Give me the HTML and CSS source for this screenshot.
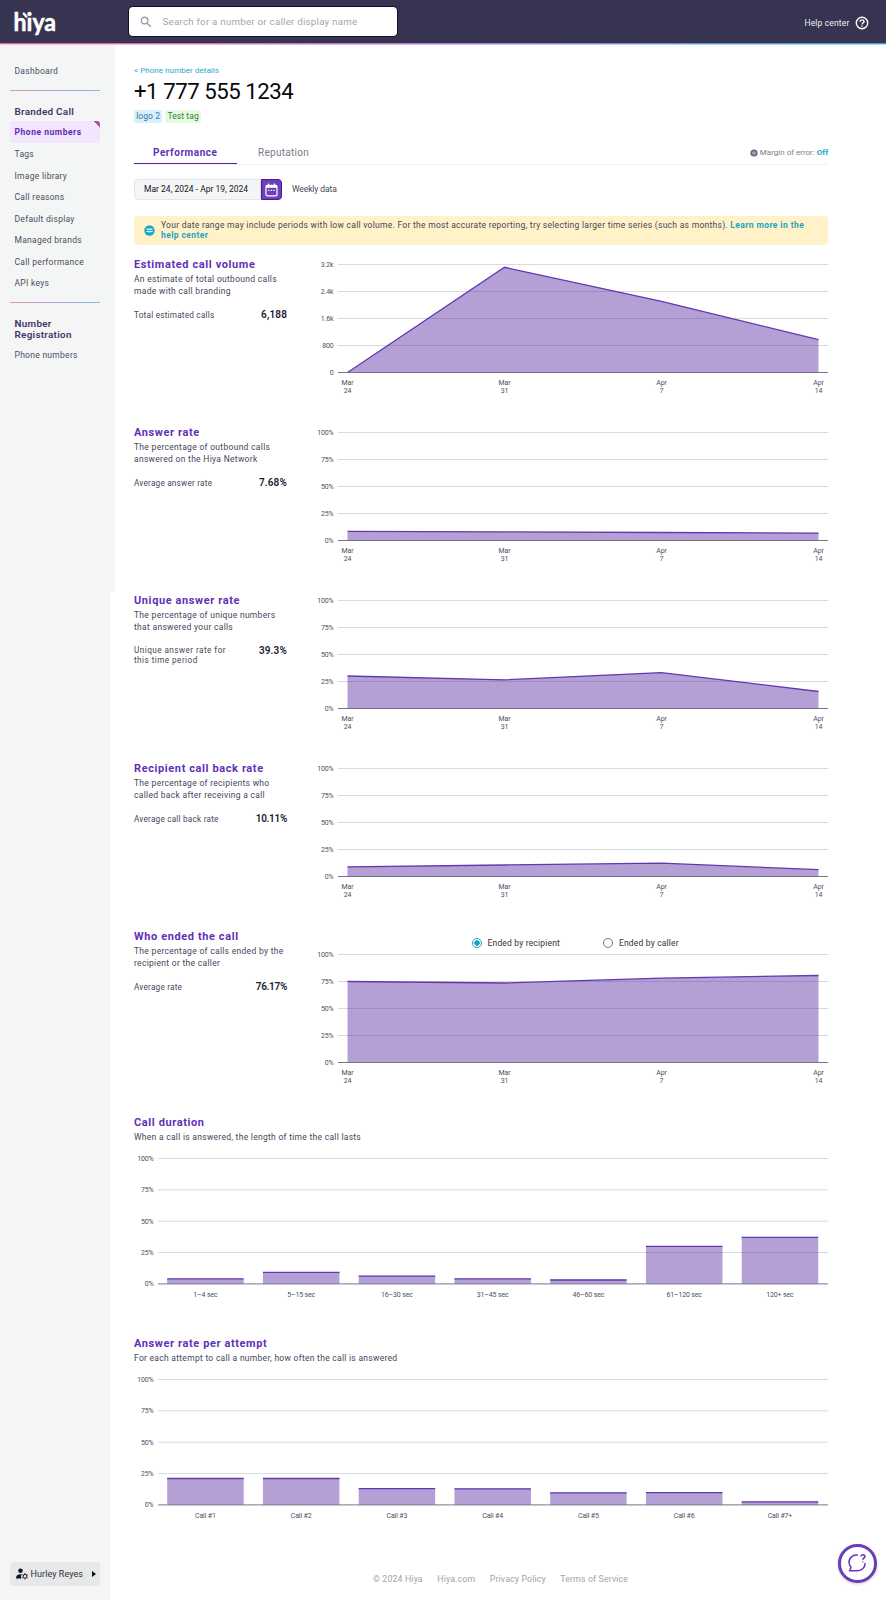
FILE: index.html
```html
<!DOCTYPE html>
<html lang="en">
<head>
<meta charset="utf-8">
<title>Phone number performance</title>
<link rel="stylesheet" href="styles.css">
</head>
<body>
<header class="topbar">
  <svg class="logo" width="44" height="30" viewBox="0 0 44 30" role="img" aria-label="hiya">
    <text x="-.5" y="22.800" textLength="42.500" lengthAdjust="spacingAndGlyphs">hiya</text>
    <path d="M9.800 5.600l2.600 3M15.600 5.800h.1"/>
  </svg>
  <div class="search">
    <svg width="12" height="12" viewBox="0 0 12 12"><circle cx="4.6" cy="4.6" r="3.3"/><path d="M7.2 7.2l3.6 3.6"/></svg>
    <span>Search for a number or caller display name</span>
  </div>
  <div class="help">
    <span>Help center</span>
    <svg width="14" height="14" viewBox="0 0 14 14"><circle cx="7" cy="7" r="5.7"/><path d="M5.1 5.7c0-2.5 3.9-2.4 3.9 0 0 1.3-2 1.4-2 2.7M7 9.6v1.2"/></svg>
  </div>
</header>
<div class="layout">
  <aside class="sidebar">
    <nav>
      <a class="item first">Dashboard</a>
      <hr>
      <h3>Branded Call</h3>
      <a class="item active">Phone numbers</a>
      <a class="item">Tags</a>
      <a class="item">Image library</a>
      <a class="item">Call reasons</a>
      <a class="item">Default display</a>
      <a class="item">Managed brands</a>
      <a class="item">Call performance</a>
      <a class="item">API keys</a>
      <hr class="second">
      <h3 class="two">Number Registration</h3>
      <a class="item">Phone numbers</a>
    </nav>
    <button class="user">
      <svg width="12" height="12" viewBox="0 0 12 12"><circle cx="4.5" cy="2.8" r="2.3"/><path d="M0 10.5c0-3 1.6-4.2 4.4-4.2.9 0 1.300.1 1.500.3-1 1-1.100 2.700-.3 3.900z"/><circle class="gear" cx="9" cy="8.300" r="1.900"/><path class="teeth" d="M9 5.200v1M9 10.400v1M6.300 6.700l.9.500M10.800 9.400l.9.500M6.300 9.900l.9-.5M10.800 7.200l.9-.5"/></svg>
      <span>Hurley Reyes</span>
      <i class="caret"></i>
    </button>
  </aside>
  <main>
    <a class="back">&lt; Phone number details</a>
    <h1>+1 777 555 1234</h1>
    <div class="tags"><span class="tag blue">logo 2</span><span class="tag green">Test tag</span></div>
    <div class="tabs">
      <span class="tab on">Performance</span><span class="tab">Reputation</span>
      <div class="margin-error">
        <svg width="8" height="8" viewBox="0 0 8 8"><circle cx="4" cy="4" r="3.600"/><path d="M2.200 3.200h3.600M2.200 4.900h3.600"/></svg>
        <span>Margin of error: <b>Off</b></span>
      </div>
    </div>
    <div class="range">
      <div class="dates">Mar 24, 2024 - Apr 19, 2024</div>
      <div class="cal"><svg width="13" height="14" viewBox="0 0 13 14"><rect x="1" y="2.300" width="11" height="10.500" rx="1.300"/><path class="top" d="M1 2.500h11v2.300H1z"/><path d="M3.500.6v2.500M9.500.6v2.500"/><path class="dots" d="M3.300 7.300h1.300M5.900 7.300h1.300M8.500 7.300h1.300"/></svg></div>
      <span class="weekly">Weekly data</span>
    </div>
    <div class="notice">
      <svg width="11" height="11" viewBox="0 0 11 11"><circle cx="5.500" cy="5.500" r="5.200"/><path d="M2.500 4.300c1-.5 2 .1 3 .1s2-.6 3-.1M2.500 6.700c1-.5 2 .1 3 .1s2-.6 3-.1"/></svg>
      <p>Your date range may include periods with low call volume. For the most accurate reporting, try selecting larger time series (such as months). <b>Learn more in the<br>help center</b></p>
    </div>

    <section class="metric">
      <div class="info"><h2>Estimated call volume</h2><p class="desc">An estimate of total outbound calls<br>made with call branding</p>
      <div class="stat"><span>Total estimated calls</span><strong>6,188</strong></div></div>
      <svg class="chart" data-kind="area" data-labels="3.2k,2.4k,1.6k,800,0" data-points="108,2.800,36.800,75.200"></svg>
    </section>
    <section class="metric">
      <div class="info"><h2>Answer rate</h2><p class="desc">The percentage of outbound calls<br>answered on the Hiya Network</p>
      <div class="stat"><span>Average answer rate</span><strong>7.68%</strong></div></div>
      <svg class="chart" data-kind="area" data-points="98.800,99.400,100,100.600"></svg>
    </section>
    <section class="metric">
      <div class="info"><h2>Unique answer rate</h2><p class="desc">The percentage of unique numbers<br>that answered your calls</p>
      <div class="stat wide"><span>Unique answer rate for<br>this time period</span><strong>39.3%</strong></div></div>
      <svg class="chart" data-kind="area" data-points="75.500,79.300,72.100,91"></svg>
    </section>
    <section class="metric">
      <div class="info"><h2>Recipient call back rate</h2><p class="desc">The percentage of recipients who<br>called back after receiving a call</p>
      <div class="stat"><span>Average call back rate</span><strong class="tight">10.11%</strong></div></div>
      <svg class="chart" data-kind="area" data-points="98.300,96.500,94.700,101.200"></svg>
    </section>
    <section class="metric ended">
      <div class="info"><h2>Who ended the call</h2><p class="desc">The percentage of calls ended by the<br>recipient or the caller</p>
      <div class="stat"><span>Average rate</span><strong class="tight">76.17%</strong></div></div>
      <div class="plot">
        <div class="radios"><label><i class="radio on"></i>Ended by recipient</label><label><i class="radio"></i>Ended by caller</label></div>
        <svg class="chart" data-kind="area" data-points="27,28.500,23.700,21"></svg>
      </div>
    </section>
    <section class="bars">
      <h2>Call duration</h2><p class="desc">When a call is answered, the length of time the call lasts</p>
      <svg class="chart" data-kind="bar" data-points="120,113.600,117.400,120,121.200,87.500,78.500" data-x="1–4 sec,5–15 sec,16–30 sec,31–45 sec,46–60 sec,61–120 sec,120+ sec"></svg>
    </section>
    <section class="bars">
      <h2>Answer rate per attempt</h2><p class="desc">For each attempt to call a number, how often the call is answered</p>
      <svg class="chart" data-kind="bar" data-points="98.700,98.700,108.800,109,113,112.800,122" data-x="Call #1,Call #2,Call #3,Call #4,Call #5,Call #6,Call #7+"></svg>
    </section>
    <footer><span>© 2024 Hiya</span><a>Hiya.com</a><a>Privacy Policy</a><a>Terms of Service</a></footer>
  </main>
</div>
<button class="fab" aria-label="Chat help">
  <svg width="20" height="20" viewBox="0 0 20 20"><path d="M10.800 2.200C5.500 1.300 1.500 5.500 2.100 10.200c.3 1.900.9 2.900 2 4.200L2.500 17.800h6.700c5.400.2 9-3 8.900-7.800"/><path class="q" d="M14 3.400c.2-2.400 4.300-2 3.900.3-.2 1.300-2.100 1.500-2.100 3M15.800 8.500v.8"/></svg>
</button>
<script src="charts.js"></script>
</body>
</html>
```
FILE: charts.js
```javascript
const PERCENT = '100%,75%,50%,25%,0%';
const DATES = [['Mar', '24'], ['Mar', '31'], ['Apr', '7'], ['Apr', '14']];

function text(cls, x, y, value) {
  return `<text class="${cls}" x="${x}" y="${y}">${value}</text>`;
}

document.querySelectorAll('.chart').forEach((svg) => {
  const area = svg.dataset.kind === 'area';
  const width = area ? 514 : 694;
  const height = area ? 140 : 150;
  const plot = area ? 108 : 125.4;
  const left = 24;
  const top = 6.5;
  const points = svg.dataset.points.split(',').map(Number);
  let out = '';

  (svg.dataset.labels || PERCENT).split(',').forEach((label, i) => {
    const y = top + (plot * i) / 4;
    out += text('y-label', left - 4.5, y + 2.5, label);
    if (i < 4) out += `<path class="grid" d="M${left} ${y}H${width}"/>`;
  });

  if (area) {
    const pts = points.map((p, i) => `${33.5 + 157 * i},${top + p}`);
    out += `<polygon class="fill" points="33.5,${top + plot} ${pts.join(' ')} 504.5,${top + plot}"/>`;
    out += `<polyline class="line" points="${pts.join(' ')}"/>`;
    DATES.forEach(([month, day], i) => {
      out += text('x-label', 33.5 + 157 * i, top + 120.6, month);
      out += text('x-label', 33.5 + 157 * i, top + 128.6, day);
    });
  } else {
    const names = svg.dataset.x.split(',');
    points.forEach((p, i) => {
      const x = 33.2 + 95.75 * i;
      out += `<rect class="fill" x="${x}" y="${top + p}" width="76.5" height="${plot - p}"/>`;
      out += `<path class="line" d="M${x} ${top + p + 0.3}h76.5"/>`;
      out += text('x-label', x + 38.2, top + plot + 12.6, names[i]);
    });
  }
  out += `<path class="axis" d="M${left} ${top + plot}H${width}"/>`;

  svg.setAttribute('width', width);
  svg.setAttribute('height', height);
  svg.setAttribute('viewBox', `0 0 ${width} ${height}`);
  svg.innerHTML = out;
});
```
FILE: styles.css
```css
* { box-sizing: border-box; }
body { margin: 0; background: #fff; color: #47455a; font: 8.5px/12px Roboto, "Liberation Sans", sans-serif; letter-spacing: .28px; }
h1, h2, h3, p { margin: 0; }
svg { display: block; flex: none; }
svg path { fill: none; }
button { border: 0; padding: 0; font: inherit; letter-spacing: inherit; color: inherit; }

.topbar { display: flex; align-items: flex-start; height: 45px; background: linear-gradient(90deg, #f8c4dc, #dcc3e6 45%, #b4d8f3 90%) 0 100% / 100% 1px no-repeat, linear-gradient(90deg, #f0609c, #b478c4 45%, #489cdc 90%) 0 43px / 100% 1px no-repeat, #363450; }
.logo { margin: 7.500px 0 0 14px; overflow: visible; }
.logo text { font: 700 24px Lato, sans-serif; letter-spacing: 0; fill: #fff; stroke: #fff; stroke-width: .5; }
.logo path { stroke: #fff; stroke-width: 2.400; stroke-linecap: round; }
.search { display: flex; align-items: center; gap: 10.500px; width: 268px; height: 29px; margin: 7px 0 0 71px; padding: 0 11px; background: #fff; border-radius: 4px; box-shadow: 0 0 0 1px #12102e; color: #a3a5af; font-size: 9.700px; letter-spacing: .26px; }
.search svg { stroke: #9b9ca6; fill: none; stroke-width: 1.400; }
.help { display: flex; align-items: center; gap: 5px; margin: 15.500px 17.500px 0 auto; color: #f0f0f5; letter-spacing: .15px; }
.help svg { stroke: #fff; fill: none; stroke-width: 1.400; }

.layout { display: flex; height: 1555px; }
.sidebar { display: flex; flex-direction: column; justify-content: space-between; width: 115px; flex: none; padding: 15px 15px 14px 9.500px; background: linear-gradient(#f4f6f6, #f4f6f6) 0 0 / 110px 100% no-repeat, linear-gradient(#f4f6f6, #f4f6f6) 0 0 / 115px 547px no-repeat; }
nav { display: flex; flex-direction: column; }
.item { height: 21.550px; padding-left: 5px; line-height: 22px; color: #4c4d60; }
hr { width: 100%; height: 1px; flex: none; margin: 8.400px 0 15px; border: 0; background: linear-gradient(90deg, #ef8fb6, #a9a6dc 55%, #86bdea); }
hr.second { margin: 8px 0 15px; }
h3 { height: 15.500px; flex: none; padding-left: 5px; font-size: 9.900px; font-weight: 600; line-height: 11px; letter-spacing: .28px; color: #443365; }
h3.two { height: 26.500px; width: 80px; }
.item.active { background: linear-gradient(225deg, #bd4c92 4.300px, transparent 4.800px), #f1e6fd; border-radius: 3px; color: #6229b5; font-weight: 700; letter-spacing: .53px; }
.user { display: flex; align-items: center; width: 90px; height: 24px; padding: 0 4px 0 6px; border-radius: 4px; background: #e7e9e9; color: #302f43; font-size: 9px; letter-spacing: .07px; }
.user svg { margin-right: 3px; fill: #151329; }
.user svg path { fill: #151329; }
.user svg .gear, .user svg .teeth { fill: none; stroke: #151329; stroke-width: 1; }
.caret { margin-left: auto; border: solid transparent; border-width: 3px 0 3px 4px; border-left-color: #111; }

main { display: flex; flex-direction: column; width: 713px; padding: 20px 0 0 19px; }
.back { height: 12px; font-size: 8px; letter-spacing: .06px; color: #28a9cf; }
h1 { height: 26px; margin-top: 1px; font-size: 22.200px; font-weight: 400; line-height: 26px; letter-spacing: -.47px; color: #08080c; }
.tags { display: flex; gap: 3px; margin-top: 6px; letter-spacing: .08px; }
.tag { height: 13px; padding: 0 2.200px; border-radius: 2px; line-height: 12.500px; }
.blue { background: #d9f0fb; color: #287da7; }
.green { background: #e5fae1; color: #3d7d3a; }
.tabs { display: flex; height: 23px; margin-top: 18.500px; border-bottom: 1px solid #eeeff6; font-size: 10px; line-height: 22px; }
.tab { height: 22px; padding: 0 20.500px 0 21px; color: #7c7c8b; letter-spacing: .28px; }
.tab.on { width: 103px; padding: 0 19px; border-bottom: 1.500px solid #5a1fb2; color: #6130b8; font-weight: 700; letter-spacing: .53px; }
.margin-error { display: flex; align-items: center; gap: 2px; height: 22px; margin: 0 0 0 auto; font-size: 8px; letter-spacing: 0; color: #7d7d8b; }
.margin-error svg circle { fill: #68677e; }
.margin-error svg path { stroke: #fff; stroke-width: .6; }
.margin-error b, .notice b { color: #1ea4c3; }
.range { display: flex; align-items: center; height: 21px; margin-top: 14.500px; }
.dates { width: 127px; height: 21px; padding-left: 9px; border: 1px solid #e4e5ec; border-radius: 4px 0 0 4px; background: #f4f6f6; color: #14131f; line-height: 19px; letter-spacing: .01px; }
.cal { display: grid; place-items: center; width: 21px; height: 21px; border: 1px solid #4d149c; border-radius: 0 4px 4px 0; background: #6b40b8; }
.cal svg { fill: none; stroke: #fff; stroke-width: 1.200; }
.cal svg .top { fill: #fff; stroke: none; }
.weekly { margin: -1px 0 0 10px; letter-spacing: -.1px; }
.notice { display: flex; align-items: center; gap: 6px; height: 29px; margin-top: 15.500px; padding-left: 10px; border-radius: 4px; background: #fff2c8; line-height: 10.500px; white-space: nowrap; }
.notice svg circle { fill: #16a8ca; }
.notice svg path { stroke: #fff; stroke-width: 1.100; }
.notice b { letter-spacing: .4px; }

.metric { display: flex; justify-content: space-between; height: 168px; }
.notice + .metric { margin-top: 13.500px; }
.info { width: 153px; }
h2 { height: 14px; font-size: 11px; font-weight: 700; line-height: 14.500px; letter-spacing: .6px; color: #6130b5; }
.desc { letter-spacing: .28px; white-space: nowrap; }
.info .desc { margin-top: .500px; letter-spacing: .3px; }
.stat { display: flex; justify-content: space-between; margin-top: 12px; font-size: 8.200px; letter-spacing: .22px; line-height: 12px; }
.stat.wide { line-height: 10px; letter-spacing: .44px; }
.stat.wide span { margin-top: .5px; }
.stat strong { font-size: 10px; font-weight: 600; letter-spacing: .15px; line-height: 12px; color: #1c1a30; }
.stat .tight { letter-spacing: -.3px; }
.ended { height: 186px; }
.radios { display: flex; gap: 43px; height: 18px; padding: 0 0 0 157.500px; color: #333; letter-spacing: .18px; }
.radios label { display: flex; align-items: center; gap: 6px; height: 12px; margin-top: 6.500px; }
.radio { width: 10px; height: 10px; border: 1px solid #74758a; border-radius: 50%; }
.radio.on { border-color: #23a5ca; background: radial-gradient(#16a1c8 2.500px, #fff 3px); }
.bars { height: 221.300px; }
.bars .desc { margin-top: .500px; }
.bars .chart { margin-top: 9.500px; }

.chart { overflow: visible; }
.chart text { fill: #4f4e61; font-size: 7px; letter-spacing: -.15px; }
.y-label { text-anchor: end; }
.x-label { text-anchor: middle; }
.grid { stroke: #d9d9de; stroke-width: 1; }
.fill { fill: #5426a0; fill-opacity: .44; }
.line { fill: none; stroke: #6337b2; stroke-width: 1.300; }
.chart .axis { stroke: #77758c; stroke-width: 1; }

footer { display: flex; gap: 14.500px; margin: 14px 0 0 239px; font-size: 8.800px; letter-spacing: .13px; color: #a2a3ad; white-space: nowrap; }
.fab { display: grid; place-items: center; position: fixed; left: 838px; top: 1544px; width: 38.500px; height: 38.500px; border: 3.500px solid #6a3dba; border-radius: 50%; background: #fff; box-shadow: 0 1px 3px #0003; }
.fab svg { stroke: #6a35bd; stroke-width: 1.500; fill: none; stroke-linejoin: round; }
.fab svg .q { stroke-width: 1.600; }
```
